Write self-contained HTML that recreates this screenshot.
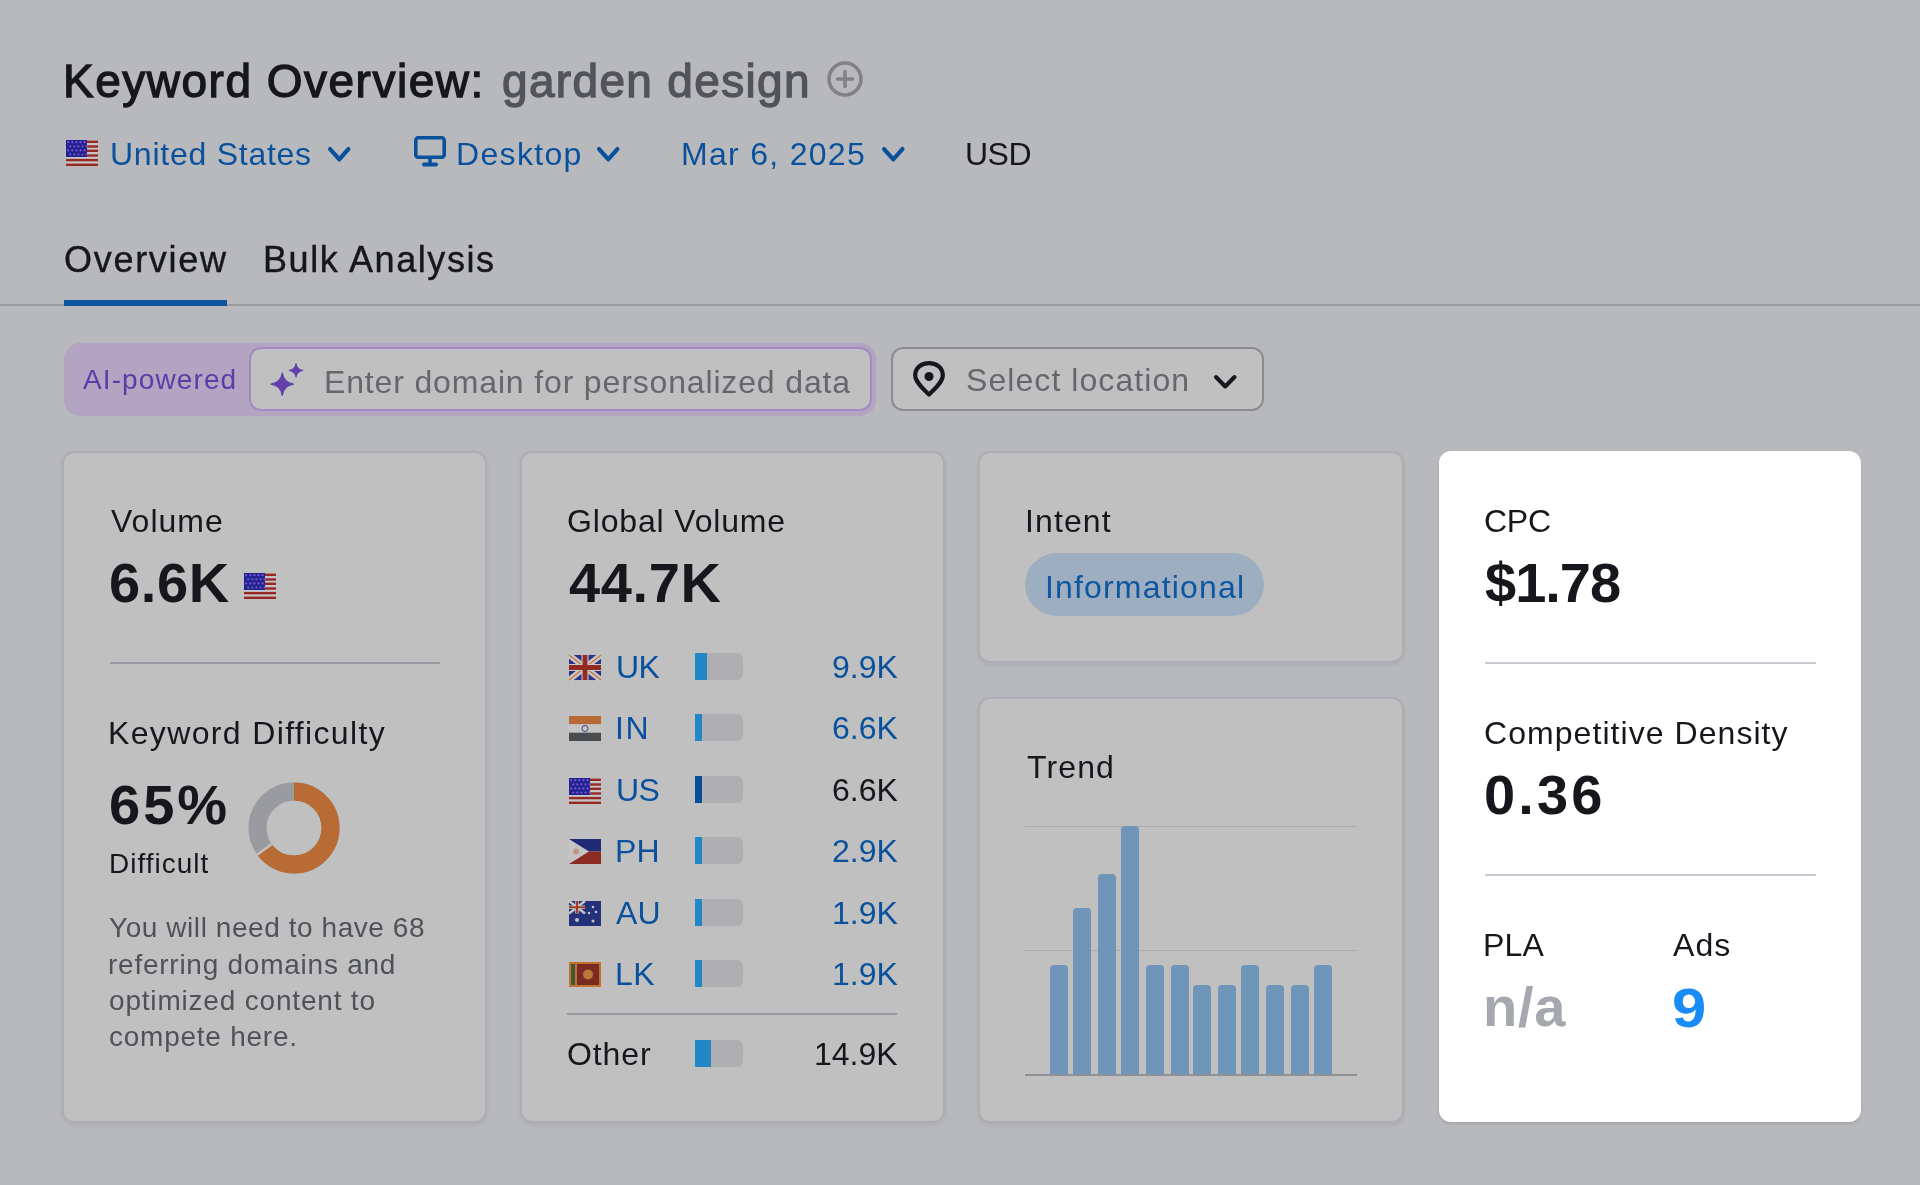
<!DOCTYPE html><html><head><meta charset="utf-8"><style>
html,body{margin:0;padding:0;background:#b8b9bd;}
body{width:1920px;height:1185px;background:#b8b9bd;position:relative;overflow:hidden;font-family:"Liberation Sans",sans-serif;}
.t{position:absolute;white-space:nowrap;will-change:transform;}
.r{position:absolute;}
.card{position:absolute;box-sizing:border-box;background:#c0c0c0;border:2px solid #adaeb3;border-radius:12px;box-shadow:0 2px 4px rgba(0,0,0,0.07);}
svg{position:absolute;overflow:visible;}
</style></head><body>
<div class="t" style="left:63.00px;top:58px;font-size:46px;line-height:46px;color:#16171d;letter-spacing:1.500px;-webkit-text-stroke:1.3px #16171d;">Keyword Overview:</div>
<div class="t" style="left:502.00px;top:58px;font-size:46px;line-height:46px;color:#53545b;letter-spacing:1.333px;-webkit-text-stroke:1.3px #53545b;">garden design</div>
<svg style="left:827px;top:61px" width="36" height="36" viewBox="0 0 36 36"><circle cx="18" cy="18" r="16" fill="none" stroke="#818188" stroke-width="3.6"/><path d="M18 10.5v15M10.5 18h15" stroke="#818188" stroke-width="3.6" stroke-linecap="round"/></svg>
<svg style="left:66px;top:140px" width="32" height="26" viewBox="0 0 32 26"><rect width="32" height="26" fill="#c6c3c9"/><rect x="0" y="0.6" width="32" height="2.4" fill="#952a22"/><rect x="0" y="5.3" width="32" height="2.4" fill="#952a22"/><rect x="0" y="9.6" width="32" height="2.4" fill="#952a22"/><rect x="0" y="14.3" width="32" height="2.4" fill="#952a22"/><rect x="0" y="18.9" width="32" height="2.4" fill="#952a22"/><rect x="0" y="23.6" width="32" height="2.4" fill="#952a22"/><rect x="0" y="0" width="21" height="17" fill="#22238e"/><circle cx="2.2" cy="2.2" r="1.1" fill="#7b55d6"/><circle cx="6.3" cy="2.2" r="1.1" fill="#7b55d6"/><circle cx="10.4" cy="2.2" r="1.1" fill="#7b55d6"/><circle cx="14.5" cy="2.2" r="1.1" fill="#7b55d6"/><circle cx="18.6" cy="2.2" r="1.1" fill="#7b55d6"/><circle cx="4.2" cy="6.3" r="1.1" fill="#7b55d6"/><circle cx="8.3" cy="6.3" r="1.1" fill="#7b55d6"/><circle cx="12.4" cy="6.3" r="1.1" fill="#7b55d6"/><circle cx="16.5" cy="6.3" r="1.1" fill="#7b55d6"/><circle cx="20.6" cy="6.3" r="1.1" fill="#7b55d6"/><circle cx="2.2" cy="10.4" r="1.1" fill="#7b55d6"/><circle cx="6.3" cy="10.4" r="1.1" fill="#7b55d6"/><circle cx="10.4" cy="10.4" r="1.1" fill="#7b55d6"/><circle cx="14.5" cy="10.4" r="1.1" fill="#7b55d6"/><circle cx="18.6" cy="10.4" r="1.1" fill="#7b55d6"/><circle cx="4.2" cy="14.5" r="1.1" fill="#7b55d6"/><circle cx="8.3" cy="14.5" r="1.1" fill="#7b55d6"/><circle cx="12.4" cy="14.5" r="1.1" fill="#7b55d6"/><circle cx="16.5" cy="14.5" r="1.1" fill="#7b55d6"/><circle cx="20.6" cy="14.5" r="1.1" fill="#7b55d6"/></svg>
<div class="t" style="left:110.00px;top:138px;font-size:32px;line-height:32px;color:#0a519d;letter-spacing:0.750px;">United States</div>
<svg style="left:328px;top:146.5px" width="22.5" height="14.5" viewBox="0 0 22.5 14.5"><path d="M2.1 2.1 L11.25 12.4 L20.4 2.1" fill="none" stroke="#0a519d" stroke-width="4.2" stroke-linecap="round" stroke-linejoin="round"/></svg>
<svg style="left:414px;top:136px" width="32" height="32" viewBox="0 0 32 32"><rect x="1.8" y="1.8" width="28.4" height="19.4" rx="2.5" fill="none" stroke="#0a519d" stroke-width="3.6"/><rect x="14.2" y="21" width="3.6" height="6" fill="#0a519d"/><rect x="8" y="26.5" width="16" height="4" rx="1.8" fill="#0a519d"/></svg>
<div class="t" style="left:456.00px;top:138px;font-size:32px;line-height:32px;color:#0a519d;letter-spacing:1.333px;">Desktop</div>
<svg style="left:597px;top:146.5px" width="22.5" height="14.5" viewBox="0 0 22.5 14.5"><path d="M2.1 2.1 L11.25 12.4 L20.4 2.1" fill="none" stroke="#0a519d" stroke-width="4.2" stroke-linecap="round" stroke-linejoin="round"/></svg>
<div class="t" style="left:681.00px;top:138px;font-size:32px;line-height:32px;color:#0a519d;letter-spacing:1.300px;">Mar 6, 2025</div>
<svg style="left:881.5px;top:146.5px" width="22.5" height="14.5" viewBox="0 0 22.5 14.5"><path d="M2.1 2.1 L11.25 12.4 L20.4 2.1" fill="none" stroke="#0a519d" stroke-width="4.2" stroke-linecap="round" stroke-linejoin="round"/></svg>
<div class="t" style="left:965.00px;top:138px;font-size:32px;line-height:32px;color:#16171d;letter-spacing:-0.500px;">USD</div>
<div class="t" style="left:64.00px;top:242px;font-size:36px;line-height:36px;color:#16171d;letter-spacing:1.714px;-webkit-text-stroke:0.4px #16171d;">Overview</div>
<div class="t" style="left:263.00px;top:242px;font-size:36px;line-height:36px;color:#16171d;letter-spacing:1.583px;-webkit-text-stroke:0.4px #16171d;">Bulk Analysis</div>
<div class="r" style="left:0px;top:304px;width:1920px;height:2px;background:#9c9da2;"></div>
<div class="r" style="left:64px;top:300px;width:163px;height:6px;background:#0c55a0;"></div>
<div class="r" style="left:64px;top:343px;width:812px;height:73px;background:#b3a4c1;border-radius:16px;"></div>
<div class="t" style="left:83.00px;top:366px;font-size:28px;line-height:28px;color:#5d3ba8;letter-spacing:1.111px;">AI-powered</div>
<div class="r" style="left:249px;top:347px;width:623px;height:64px;box-sizing:border-box;border:2px solid #a38ac6;border-radius:12px;background:#c0c0c0;"></div>
<svg style="left:262px;top:355px" width="50" height="50" viewBox="0 0 50 50"><path d="M20.3 17.90 Q21.64 27.76 31.50 29.1 Q21.64 30.44 20.3 40.30 Q18.96 30.44 9.10 29.1 Q18.96 27.76 20.3 17.90Z" fill="#6340ab" stroke="#6340ab" stroke-width="1.2" stroke-linejoin="round"/><path d="M34 8.80 Q34.79 14.61 40.60 15.4 Q34.79 16.19 34 22.00 Q33.21 16.19 27.40 15.4 Q33.21 14.61 34 8.80Z" fill="#6340ab" stroke="#6340ab" stroke-width="1.2" stroke-linejoin="round"/></svg>
<div class="t" style="left:324.00px;top:366px;font-size:32px;line-height:32px;color:#65666e;letter-spacing:0.848px;">Enter domain for personalized data</div>
<div class="r" style="left:891px;top:347px;width:373px;height:64px;box-sizing:border-box;border:2px solid #8b8c91;border-radius:12px;background:#c0c0c0;"></div>
<svg style="left:913px;top:361px" width="32" height="36" viewBox="0 0 32 36"><path d="M16 33.5 C9 27 2.2 20.5 2.2 14.2 C2.2 6.6 8.4 2.2 16 2.2 C23.6 2.2 29.8 6.6 29.8 14.2 C29.8 20.5 23 27 16 33.5Z" fill="none" stroke="#16171d" stroke-width="4.2" stroke-linejoin="round"/><circle cx="16" cy="15.5" r="4.5" fill="#16171d"/></svg>
<div class="t" style="left:966.00px;top:364px;font-size:32px;line-height:32px;color:#65666e;letter-spacing:1.071px;">Select location</div>
<svg style="left:1214px;top:375px" width="22.5" height="13.5" viewBox="0 0 22.5 13.5"><path d="M2.0 2.0 L11.25 11.5 L20.5 2.0" fill="none" stroke="#16171d" stroke-width="4" stroke-linecap="round" stroke-linejoin="round"/></svg>
<div class="card" style="left:62px;top:451px;width:425px;height:672px;"></div>
<div class="card" style="left:520px;top:451px;width:425px;height:672px;"></div>
<div class="card" style="left:978px;top:451px;width:426px;height:212px;"></div>
<div class="card" style="left:978px;top:697px;width:426px;height:426px;"></div>
<div class="card" style="left:1439px;top:451px;width:422px;height:671px;background:#fff;border-color:#fff;box-shadow:0 2px 3px rgba(0,0,0,0.1);"></div>
<div class="t" style="left:110.50px;top:505px;font-size:32px;line-height:32px;color:#16171d;letter-spacing:1.000px;">Volume</div>
<div class="t" style="left:109.00px;top:555px;font-size:56px;line-height:56px;color:#16171d;font-weight:bold;letter-spacing:0.667px;">6.6K</div>
<svg style="left:244px;top:572.5px" width="32" height="26" viewBox="0 0 32 26"><rect width="32" height="26" fill="#c6c3c9"/><rect x="0" y="0.6" width="32" height="2.4" fill="#952a22"/><rect x="0" y="5.3" width="32" height="2.4" fill="#952a22"/><rect x="0" y="9.6" width="32" height="2.4" fill="#952a22"/><rect x="0" y="14.3" width="32" height="2.4" fill="#952a22"/><rect x="0" y="18.9" width="32" height="2.4" fill="#952a22"/><rect x="0" y="23.6" width="32" height="2.4" fill="#952a22"/><rect x="0" y="0" width="21" height="17" fill="#22238e"/><circle cx="2.2" cy="2.2" r="1.1" fill="#7b55d6"/><circle cx="6.3" cy="2.2" r="1.1" fill="#7b55d6"/><circle cx="10.4" cy="2.2" r="1.1" fill="#7b55d6"/><circle cx="14.5" cy="2.2" r="1.1" fill="#7b55d6"/><circle cx="18.6" cy="2.2" r="1.1" fill="#7b55d6"/><circle cx="4.2" cy="6.3" r="1.1" fill="#7b55d6"/><circle cx="8.3" cy="6.3" r="1.1" fill="#7b55d6"/><circle cx="12.4" cy="6.3" r="1.1" fill="#7b55d6"/><circle cx="16.5" cy="6.3" r="1.1" fill="#7b55d6"/><circle cx="20.6" cy="6.3" r="1.1" fill="#7b55d6"/><circle cx="2.2" cy="10.4" r="1.1" fill="#7b55d6"/><circle cx="6.3" cy="10.4" r="1.1" fill="#7b55d6"/><circle cx="10.4" cy="10.4" r="1.1" fill="#7b55d6"/><circle cx="14.5" cy="10.4" r="1.1" fill="#7b55d6"/><circle cx="18.6" cy="10.4" r="1.1" fill="#7b55d6"/><circle cx="4.2" cy="14.5" r="1.1" fill="#7b55d6"/><circle cx="8.3" cy="14.5" r="1.1" fill="#7b55d6"/><circle cx="12.4" cy="14.5" r="1.1" fill="#7b55d6"/><circle cx="16.5" cy="14.5" r="1.1" fill="#7b55d6"/><circle cx="20.6" cy="14.5" r="1.1" fill="#7b55d6"/></svg>
<div class="r" style="left:110px;top:662px;width:330px;height:2px;background:#9a9ba2;"></div>
<div class="t" style="left:108.00px;top:717px;font-size:32px;line-height:32px;color:#16171d;letter-spacing:1.353px;">Keyword Difficulty</div>
<div class="t" style="left:109.00px;top:777px;font-size:56px;line-height:56px;color:#16171d;font-weight:bold;letter-spacing:3.000px;">65%</div>
<div class="t" style="left:109.00px;top:850px;font-size:28px;line-height:28px;color:#16171d;letter-spacing:1.000px;">Difficult</div>
<svg style="left:248px;top:782px" width="92" height="92" viewBox="0 0 92 92"><g transform="rotate(-90 46 46)"><circle cx="46" cy="46" r="36.40" fill="none" stroke="#9a9ba1" stroke-width="18.20"/><circle cx="46" cy="46" r="36.40" fill="none" stroke="#b96b36" stroke-width="18.20" stroke-dasharray="148.66 228.71"/><line x1="46" y1="46" x2="10.73" y2="-2.54" stroke="#c0c0c0" stroke-width="2.5"/></g><circle cx="46" cy="46" r="27.3" fill="#c0c0c0"/></svg>
<div class="t" style="left:109.00px;top:914px;font-size:28px;line-height:28px;color:#4f525a;letter-spacing:0.565px;">You will need to have 68</div>
<div class="t" style="left:108.00px;top:951px;font-size:28px;line-height:28px;color:#4f525a;letter-spacing:0.750px;">referring domains and</div>
<div class="t" style="left:109.00px;top:987px;font-size:28px;line-height:28px;color:#4f525a;letter-spacing:0.811px;">optimized content to</div>
<div class="t" style="left:109.00px;top:1023px;font-size:28px;line-height:28px;color:#4f525a;letter-spacing:0.750px;">compete here.</div>
<div class="t" style="left:567.00px;top:505px;font-size:32px;line-height:32px;color:#16171d;letter-spacing:0.833px;">Global Volume</div>
<div class="t" style="left:568.50px;top:555px;font-size:56px;line-height:56px;color:#16171d;font-weight:bold;letter-spacing:0.625px;">44.7K</div>
<svg style="left:569px;top:655px" width="32" height="25" viewBox="0 0 32 25"><rect width="32" height="25" fill="#2a3386"/><path d="M0 0L32 25M32 0L0 25" stroke="#c9c6c6" stroke-width="6"/><path d="M0 0L32 25M32 0L0 25" stroke="#c77a45" stroke-width="1.4"/><path d="M16 0V25M0 12.5H32" stroke="#c9c6c6" stroke-width="7"/><path d="M16 0V25M0 12.5H32" stroke="#922a22" stroke-width="4.8"/></svg>
<div class="t" style="left:615.50px;top:651px;font-size:32px;line-height:32px;color:#0a519d;letter-spacing:-0.500px;">UK</div>
<div class="r" style="left:695px;top:653px;width:48px;height:27px;background:#aeaeb3;border-radius:6px;overflow:hidden;"></div>
<div class="r" style="left:695px;top:653px;width:11.5px;height:27px;background:#2187c5;"></div>
<div class="t" style="left:832.00px;top:651px;font-size:32px;line-height:32px;color:#0a519d;">9.9K</div>
<svg style="left:569px;top:716px" width="32" height="25" viewBox="0 0 32 25"><rect width="32" height="8.3" fill="#b86a35"/><rect y="8.3" width="32" height="8.4" fill="#c4c4c4"/><rect y="16.7" width="32" height="8.3" fill="#4a4d50"/><circle cx="16" cy="12.5" r="3" fill="none" stroke="#3a4a80" stroke-width="1"/></svg>
<div class="t" style="left:614.50px;top:712px;font-size:32px;line-height:32px;color:#0a519d;letter-spacing:1.500px;">IN</div>
<div class="r" style="left:695px;top:714px;width:48px;height:27px;background:#aeaeb3;border-radius:6px;overflow:hidden;"></div>
<div class="r" style="left:695px;top:714px;width:7px;height:27px;background:#2187c5;"></div>
<div class="t" style="left:832.00px;top:712px;font-size:32px;line-height:32px;color:#0a519d;">6.6K</div>
<svg style="left:569px;top:778px" width="32" height="26" viewBox="0 0 32 26"><rect width="32" height="26" fill="#c6c3c9"/><rect x="0" y="0.6" width="32" height="2.4" fill="#952a22"/><rect x="0" y="5.3" width="32" height="2.4" fill="#952a22"/><rect x="0" y="9.6" width="32" height="2.4" fill="#952a22"/><rect x="0" y="14.3" width="32" height="2.4" fill="#952a22"/><rect x="0" y="18.9" width="32" height="2.4" fill="#952a22"/><rect x="0" y="23.6" width="32" height="2.4" fill="#952a22"/><rect x="0" y="0" width="21" height="17" fill="#22238e"/><circle cx="2.2" cy="2.2" r="1.1" fill="#7b55d6"/><circle cx="6.3" cy="2.2" r="1.1" fill="#7b55d6"/><circle cx="10.4" cy="2.2" r="1.1" fill="#7b55d6"/><circle cx="14.5" cy="2.2" r="1.1" fill="#7b55d6"/><circle cx="18.6" cy="2.2" r="1.1" fill="#7b55d6"/><circle cx="4.2" cy="6.3" r="1.1" fill="#7b55d6"/><circle cx="8.3" cy="6.3" r="1.1" fill="#7b55d6"/><circle cx="12.4" cy="6.3" r="1.1" fill="#7b55d6"/><circle cx="16.5" cy="6.3" r="1.1" fill="#7b55d6"/><circle cx="20.6" cy="6.3" r="1.1" fill="#7b55d6"/><circle cx="2.2" cy="10.4" r="1.1" fill="#7b55d6"/><circle cx="6.3" cy="10.4" r="1.1" fill="#7b55d6"/><circle cx="10.4" cy="10.4" r="1.1" fill="#7b55d6"/><circle cx="14.5" cy="10.4" r="1.1" fill="#7b55d6"/><circle cx="18.6" cy="10.4" r="1.1" fill="#7b55d6"/><circle cx="4.2" cy="14.5" r="1.1" fill="#7b55d6"/><circle cx="8.3" cy="14.5" r="1.1" fill="#7b55d6"/><circle cx="12.4" cy="14.5" r="1.1" fill="#7b55d6"/><circle cx="16.5" cy="14.5" r="1.1" fill="#7b55d6"/><circle cx="20.6" cy="14.5" r="1.1" fill="#7b55d6"/></svg>
<div class="t" style="left:615.50px;top:774px;font-size:32px;line-height:32px;color:#0a519d;letter-spacing:-0.500px;">US</div>
<div class="r" style="left:695px;top:776px;width:48px;height:27px;background:#aeaeb3;border-radius:6px;overflow:hidden;"></div>
<div class="r" style="left:695px;top:776px;width:7px;height:27px;background:#044f98;"></div>
<div class="t" style="left:832.00px;top:774px;font-size:32px;line-height:32px;color:#16171d;">6.6K</div>
<svg style="left:569px;top:839px" width="32" height="25" viewBox="0 0 32 25"><rect width="32" height="12.5" fill="#1f2b77"/><rect y="12.5" width="32" height="12.5" fill="#8c2a24"/><path d="M0 0L20 12.5L0 25Z" fill="#c4c4c4"/><circle cx="7" cy="12.5" r="3" fill="#c09a80"/></svg>
<div class="t" style="left:614.50px;top:835px;font-size:32px;line-height:32px;color:#0a519d;letter-spacing:0.100px;">PH</div>
<div class="r" style="left:695px;top:837px;width:48px;height:27px;background:#aeaeb3;border-radius:6px;overflow:hidden;"></div>
<div class="r" style="left:695px;top:837px;width:7px;height:27px;background:#2187c5;"></div>
<div class="t" style="left:832.00px;top:835px;font-size:32px;line-height:32px;color:#0a519d;">2.9K</div>
<svg style="left:569px;top:901px" width="32" height="25" viewBox="0 0 32 25"><rect width="32" height="25" fill="#23307a"/><path d="M0 0L16 12.5M16 0L0 12.5" stroke="#c4c4c4" stroke-width="2.5"/><path d="M8 0V12.5M0 6.25H16" stroke="#c4c4c4" stroke-width="3.5"/><path d="M8 0V12.5M0 6.25H16" stroke="#a33a2c" stroke-width="2"/><circle cx="8" cy="19" r="2" fill="#c4c4c4"/><circle cx="24" cy="6" r="1.3" fill="#c4c4c4"/><circle cx="20" cy="12" r="1.3" fill="#c4c4c4"/><circle cx="27" cy="11" r="1.3" fill="#c4c4c4"/><circle cx="24" cy="20" r="1.5" fill="#c4c4c4"/></svg>
<div class="t" style="left:616.10px;top:897px;font-size:32px;line-height:32px;color:#0a519d;letter-spacing:0.100px;">AU</div>
<div class="r" style="left:695px;top:899px;width:48px;height:27px;background:#aeaeb3;border-radius:6px;overflow:hidden;"></div>
<div class="r" style="left:695px;top:899px;width:7px;height:27px;background:#2187c5;"></div>
<div class="t" style="left:832.00px;top:897px;font-size:32px;line-height:32px;color:#0a519d;">1.9K</div>
<svg style="left:569px;top:962px" width="32" height="25" viewBox="0 0 32 25"><rect width="32" height="25" fill="#c0732f"/><rect x="2" y="2" width="4" height="21" fill="#3a5a3a"/><rect x="8" y="2" width="22" height="21" fill="#7a2a22"/><circle cx="19" cy="12.5" r="5" fill="#b9793a"/></svg>
<div class="t" style="left:615.00px;top:958px;font-size:32px;line-height:32px;color:#0a519d;letter-spacing:0.500px;">LK</div>
<div class="r" style="left:695px;top:960px;width:48px;height:27px;background:#aeaeb3;border-radius:6px;overflow:hidden;"></div>
<div class="r" style="left:695px;top:960px;width:6.5px;height:27px;background:#2187c5;"></div>
<div class="t" style="left:832.00px;top:958px;font-size:32px;line-height:32px;color:#0a519d;">1.9K</div>
<div class="r" style="left:567px;top:1013px;width:330px;height:2px;background:#9a9ba2;"></div>
<div class="t" style="left:567.00px;top:1038px;font-size:32px;line-height:32px;color:#16171d;letter-spacing:0.900px;">Other</div>
<div class="r" style="left:695px;top:1040px;width:48px;height:27px;background:#aeaeb3;border-radius:6px;"></div>
<div class="r" style="left:695px;top:1040px;width:15.5px;height:27px;background:#2187c5;"></div>
<div class="t" style="left:814.00px;top:1038px;font-size:32px;line-height:32px;color:#16171d;">14.9K</div>
<div class="t" style="left:1025.00px;top:505px;font-size:32px;line-height:32px;color:#16171d;letter-spacing:1.100px;">Intent</div>
<div class="r" style="left:1025px;top:553px;width:239px;height:63px;background:#9daec0;border-radius:32px;"></div>
<div class="t" style="left:1045.00px;top:571px;font-size:32px;line-height:32px;color:#0f56a0;letter-spacing:1.167px;">Informational</div>
<div class="t" style="left:1026.50px;top:751px;font-size:32px;line-height:32px;color:#16171d;letter-spacing:1.125px;">Trend</div>
<div class="r" style="left:1025px;top:826px;width:332px;height:1px;background:#a9aaaf;"></div>
<div class="r" style="left:1025px;top:950px;width:332px;height:1px;background:#a9aaaf;"></div>
<div class="r" style="left:1050px;top:965px;width:18px;height:110px;background:#6f95b8;border-radius:4px 4px 0 0;"></div>
<div class="r" style="left:1073px;top:908px;width:18px;height:167px;background:#6f95b8;border-radius:4px 4px 0 0;"></div>
<div class="r" style="left:1098px;top:874px;width:18px;height:201px;background:#6f95b8;border-radius:4px 4px 0 0;"></div>
<div class="r" style="left:1121px;top:826px;width:18px;height:249px;background:#6f95b8;border-radius:4px 4px 0 0;"></div>
<div class="r" style="left:1146px;top:965px;width:18px;height:110px;background:#6f95b8;border-radius:4px 4px 0 0;"></div>
<div class="r" style="left:1171px;top:965px;width:18px;height:110px;background:#6f95b8;border-radius:4px 4px 0 0;"></div>
<div class="r" style="left:1193px;top:985px;width:18px;height:90px;background:#6f95b8;border-radius:4px 4px 0 0;"></div>
<div class="r" style="left:1218px;top:985px;width:18px;height:90px;background:#6f95b8;border-radius:4px 4px 0 0;"></div>
<div class="r" style="left:1241px;top:965px;width:18px;height:110px;background:#6f95b8;border-radius:4px 4px 0 0;"></div>
<div class="r" style="left:1266px;top:985px;width:18px;height:90px;background:#6f95b8;border-radius:4px 4px 0 0;"></div>
<div class="r" style="left:1291px;top:985px;width:18px;height:90px;background:#6f95b8;border-radius:4px 4px 0 0;"></div>
<div class="r" style="left:1314px;top:965px;width:18px;height:110px;background:#6f95b8;border-radius:4px 4px 0 0;"></div>
<div class="r" style="left:1025px;top:1073.5px;width:332px;height:2.5px;background:#8f9096;"></div>
<div class="t" style="left:1484.00px;top:505px;font-size:32px;line-height:32px;color:#16171d;letter-spacing:-0.250px;">CPC</div>
<div class="t" style="left:1485.00px;top:555px;font-size:56px;line-height:56px;color:#16171d;font-weight:bold;letter-spacing:-1.000px;">$1.78</div>
<div class="r" style="left:1485px;top:661.5px;width:330.5px;height:2.2000000000000455px;background:#c8cad1;"></div>
<div class="t" style="left:1483.50px;top:717px;font-size:32px;line-height:32px;color:#16171d;letter-spacing:1.056px;">Competitive Density</div>
<div class="t" style="left:1484.00px;top:767px;font-size:56px;line-height:56px;color:#16171d;font-weight:bold;letter-spacing:3.167px;">0.36</div>
<div class="r" style="left:1485px;top:873.7px;width:330.5px;height:2.099999999999909px;background:#c8cad1;"></div>
<div class="t" style="left:1483.30px;top:929px;font-size:32px;line-height:32px;color:#16171d;letter-spacing:0.150px;">PLA</div>
<div class="t" style="left:1673.40px;top:929px;font-size:32px;line-height:32px;color:#16171d;letter-spacing:1.100px;">Ads</div>
<div class="t" style="left:1483.00px;top:979px;font-size:56px;line-height:56px;color:#a6a8b0;font-weight:bold;letter-spacing:0.750px;">n/a</div>
<div class="t" style="left:1672.00px;top:980px;font-size:56px;line-height:56px;color:#1a8cf8;font-weight:bold;transform:scaleX(1.1);transform-origin:0 0;">9</div>
</body></html>
